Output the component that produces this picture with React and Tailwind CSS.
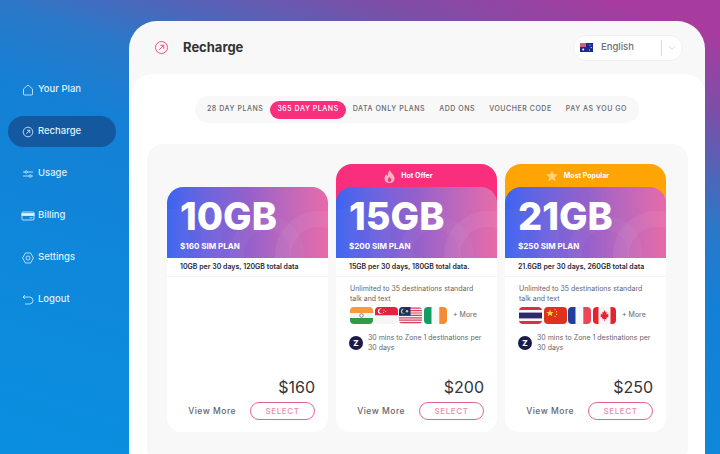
import { ChevronDown } from 'lucide-react';

const font = { fontFamily: 'Inter, "Open Sans", sans-serif' };

const HomeIcon = () => (
  <svg width="12" height="12" viewBox="0 0 12 12" fill="none" stroke="currentColor" strokeWidth="0.8">
    <path d="M1.5 5 L6 1 L10.5 5 V10 Q10.5 11 9.5 11 H2.5 Q1.5 11 1.5 10 Z" />
  </svg>
);

const RechargeIcon = ({ size = 12, width = 0.8 }) => (
  <svg width={size} height={size} viewBox="0 0 12 12" fill="none" stroke="currentColor" strokeWidth={width}>
    <circle cx="6" cy="6" r="4.8" />
    <path d="M4.2 7.8 L7.8 4.2 M5 4.2 H7.8 V7" />
  </svg>
);

const UsageIcon = () => (
  <svg width="12" height="12" viewBox="0 0 12 12" fill="none" stroke="currentColor" strokeWidth="0.8">
    <path d="M1 4 H3 M5.5 4 H11 M1 8 H7 M9.5 8 H11" />
    <circle cx="4.2" cy="4" r="1.2" />
    <circle cx="8.2" cy="8" r="1.2" />
  </svg>
);

const BillingIcon = () => (
  <svg width="14" height="12" viewBox="0 0 14 12" fill="none" stroke="currentColor" strokeWidth="0.8">
    <rect x="1" y="2" width="12" height="8" rx="1" />
    <rect x="1" y="3.6" width="12" height="2" fill="currentColor" />
    <path d="M8.5 7.8 H11.5" />
  </svg>
);

const SettingsIcon = () => (
  <svg width="12" height="12" viewBox="0 0 12 12" fill="none" stroke="currentColor" strokeWidth="0.8">
    <path d="M3.4 1 H8.6 L11.4 6 L8.6 11 H3.4 L0.6 6 Z" />
    <circle cx="6" cy="6" r="2" />
  </svg>
);

const LogoutIcon = () => (
  <svg width="12" height="12" viewBox="0 0 12 12" fill="none" stroke="currentColor" strokeWidth="0.8">
    <path d="M3 1 L1 3 L3 5 M1 3 H7.5 A3.4 3.4 0 0 1 7.5 10 H3" />
  </svg>
);

const FlameIcon = () => (
  <svg width="11" height="13" viewBox="0 0 11 13" fill="#ffb4c4">
    <path d="M5.8 0 C6.2 2.4 10.5 4.6 10.5 8.4 C10.5 11.2 8.2 13 5.5 13 C2.8 13 0.5 11.2 0.5 8.4 C0.5 6.4 1.6 5 2.6 4.2 C2.7 5.2 3 5.9 3.7 6.3 C3.6 4 4.4 1.6 5.8 0 Z M5.5 7 C4.6 8.2 3.7 9 3.7 10.2 C3.7 11.2 4.5 11.9 5.5 11.9 C6.5 11.9 7.3 11.2 7.3 10.2 C7.3 9 6.3 8.2 5.5 7 Z" fillRule="evenodd" />
  </svg>
);

const StarIcon = () => (
  <svg width="12" height="12" viewBox="0 0 12 12" fill="#ffd277">
    <path d="M6 0.5 L7.7 4 L11.6 4.5 L8.8 7.2 L9.5 11.2 L6 9.3 L2.5 11.2 L3.2 7.2 L0.4 4.5 L4.3 4 Z" />
  </svg>
);

const FlagShell = ({ children }) => (
  <svg width="23" height="17" viewBox="0 0 23 17" className="shrink-0 rounded-[4px]">
    {children}
  </svg>
);

const flags = {
  india: (
    <FlagShell>
      <rect width="23" height="6" fill="#f79a3c" />
      <rect y="6" width="23" height="5" fill="#f4f4f4" />
      <rect y="11" width="23" height="6" fill="#2f9a4a" />
      <circle cx="11.5" cy="8.5" r="1.8" fill="none" stroke="#5a62a8" strokeWidth="0.7" />
    </FlagShell>
  ),
  singapore: (
    <FlagShell>
      <rect width="23" height="8.5" fill="#e0233f" />
      <rect y="8.5" width="23" height="8.5" fill="#f6f6f6" />
      <circle cx="5.5" cy="4.2" r="2.6" fill="#fff" />
      <circle cx="6.6" cy="4.2" r="2.4" fill="#e0233f" />
      <circle cx="9" cy="3" r="0.5" fill="#fff" />
      <circle cx="10.6" cy="4.4" r="0.5" fill="#fff" />
      <circle cx="8.6" cy="5.6" r="0.5" fill="#fff" />
    </FlagShell>
  ),
  malaysia: (
    <FlagShell>
      <rect width="23" height="17" fill="#f5f5f5" />
      <path d="M0 1.2 H23 M0 3.6 H23 M0 6 H23 M0 8.4 H23 M0 10.8 H23 M0 13.2 H23 M0 15.6 H23" stroke="#d9405a" strokeWidth="1.2" />
      <rect width="11.5" height="8.6" fill="#18306e" />
      <circle cx="4.4" cy="4.3" r="2.5" fill="#f6c93a" />
      <circle cx="5.4" cy="4.3" r="2.2" fill="#18306e" />
      <circle cx="8" cy="4.3" r="1.2" fill="#f6c93a" />
    </FlagShell>
  ),
  ireland: (
    <FlagShell>
      <rect width="7.7" height="17" fill="#169b62" />
      <rect x="7.7" width="7.6" height="17" fill="#f8f8f8" />
      <rect x="15.3" width="7.7" height="17" fill="#f58b32" />
    </FlagShell>
  ),
  thailand: (
    <FlagShell>
      <rect width="23" height="17" fill="#d8304a" />
      <rect y="3" width="23" height="11" fill="#f6f6f6" />
      <rect y="5.6" width="23" height="5.8" fill="#2d2a6b" />
    </FlagShell>
  ),
  china: (
    <FlagShell>
      <rect width="23" height="17" fill="#e0301e" />
      <path d="M6 2.4 L7 5 L9.6 5 L7.6 6.7 L8.3 9.3 L6 7.8 L3.7 9.3 L4.4 6.7 L2.4 5 L5 5 Z" fill="#f9d43a" />
      <circle cx="11" cy="2.6" r="0.7" fill="#f9d43a" />
      <circle cx="12.6" cy="4.8" r="0.7" fill="#f9d43a" />
      <circle cx="12.6" cy="7.4" r="0.7" fill="#f9d43a" />
      <circle cx="11" cy="9.4" r="0.7" fill="#f9d43a" />
    </FlagShell>
  ),
  france: (
    <FlagShell>
      <rect width="7.7" height="17" fill="#1d3f9e" />
      <rect x="7.7" width="7.6" height="17" fill="#f8f8f8" />
      <rect x="15.3" width="7.7" height="17" fill="#ef4456" />
    </FlagShell>
  ),
  canada: (
    <FlagShell>
      <rect width="23" height="17" fill="#f5f5f5" />
      <rect width="5.5" height="17" fill="#e5232e" />
      <rect x="17.5" width="5.5" height="17" fill="#e5232e" />
      <path d="M11.5 3 L12.6 5.4 L13.8 4.8 L13.4 7.6 L15.4 6.8 L15 8.4 L16 9 L13.4 11 L13.6 12.2 L11.8 12 V14 H11.2 V12 L9.4 12.2 L9.6 11 L7 9 L8 8.4 L7.6 6.8 L9.6 7.6 L9.2 4.8 L10.4 5.4 Z" fill="#e5232e" />
    </FlagShell>
  ),
};

const Watermark = () => (
  <svg className="absolute inset-0 h-full w-full" viewBox="0 0 161 71" fill="none">
    <rect x="0" y="22" width="22" height="49" fill="#fff" opacity="0.025" />
    <rect x="34" y="22" width="20" height="49" fill="#fff" opacity="0.025" />
    <circle cx="100" cy="66" r="30" stroke="#fff" strokeOpacity="0.035" strokeWidth="14" />
    <circle cx="152" cy="68" r="36" stroke="#fff" strokeOpacity="0.06" strokeWidth="16" />
  </svg>
);

const navItems = [
  { label: 'Your Plan', icon: <HomeIcon /> },
  { label: 'Recharge', icon: <RechargeIcon />, active: true },
  { label: 'Usage', icon: <UsageIcon /> },
  { label: 'Billing', icon: <BillingIcon /> },
  { label: 'Settings', icon: <SettingsIcon /> },
  { label: 'Logout', icon: <LogoutIcon /> },
];

const tabs = [
  { label: '28 DAY PLANS' },
  { label: '365 DAY PLANS', active: true },
  { label: 'DATA ONLY PLANS' },
  { label: 'ADD ONS' },
  { label: 'VOUCHER CODE' },
  { label: 'PAY AS YOU GO' },
];

const plans = [
  { size: '10GB', sim: '$160 SIM PLAN', summary: '10GB per 30 days, 120GB total data', price: '$160' },
  {
    size: '15GB',
    sim: '$200 SIM PLAN',
    summary: '15GB per 30 days, 180GB total data.',
    price: '$200',
    badge: 'Hot Offer',
    badgeIcon: <FlameIcon />,
    badgeClass: 'bg-[#f92f7d]',
    countries: ['india', 'singapore', 'malaysia', 'ireland'],
  },
  {
    size: '21GB',
    sim: '$250 SIM PLAN',
    summary: '21.6GB per 30 days, 260GB total data',
    price: '$250',
    badge: 'Most Popular',
    badgeIcon: <StarIcon />,
    badgeClass: 'bg-[#ffa405]',
    countries: ['thailand', 'china', 'france', 'canada'],
  },
];

const Sidebar = () => (
  <nav className="flex w-[129px] shrink-0 flex-col gap-[11px] pl-2 pr-[13px] pt-[74px] text-[#dff1fd]">
    {navItems.map((item) => (
      <div
        key={item.label}
        className={`flex h-[31px] items-center gap-[3px] rounded-full pl-[12px] text-[9.5px] font-medium ${item.active ? 'bg-[#14599f]' : ''}`}
      >
        <span className="flex w-[15px] justify-center">{item.icon}</span>
        {item.label}
      </div>
    ))}
  </nav>
);

const Header = () => (
  <header className="flex h-[53px] shrink-0 items-center pl-[25px] pr-[22px]">
    <span className="text-[#e2557f]">
      <RechargeIcon size={15} width={0.8} />
    </span>
    <h1 className="ml-[14px] text-[13px] font-bold text-[#333]">Recharge</h1>
    <div className="ml-auto flex h-[26px] w-[110px] items-center rounded-full border border-[#f0f0f2] bg-white pl-[6px]">
      <svg width="13" height="9" viewBox="0 0 13 9" className="shrink-0">
        <rect width="13" height="9" fill="#1c2a8c" />
        <rect width="6" height="4" fill="#c9647f" />
        <circle cx="3.2" cy="6.6" r="1" fill="#fff" />
        <circle cx="10" cy="2" r="0.6" fill="#fff" />
        <circle cx="11.2" cy="4.6" r="0.6" fill="#fff" />
        <circle cx="9.4" cy="7" r="0.6" fill="#fff" />
      </svg>
      <span className="ml-[8px] text-[9.5px] font-medium text-[#6f6f73]">English</span>
      <span className="ml-auto h-[16px] w-px bg-[#dcdcde]" />
      <ChevronDown size={10} strokeWidth={1} className="mx-[5px] text-[#9a9a9e]" />
    </div>
  </header>
);

const PlanTabs = () => (
  <div className="flex justify-center pr-[3px]">
    <div className="flex h-[27px] items-center rounded-full bg-[#f8f8f9] px-[5px]">
      {tabs.map((tab) => (
        <span
          key={tab.label}
          className={`flex h-[18px] items-center rounded-full px-[7px] text-[7px] font-medium tracking-[0.55px] whitespace-nowrap ${tab.active ? 'bg-[#f92f7d] font-bold text-white' : 'text-[#66666a]'}`}
        >
          {tab.label}
        </span>
      ))}
    </div>
  </div>
);

const PlanCard = ({ plan }) => (
  <article className="flex h-[268px] flex-col">
    <div className={`shrink-0 overflow-hidden rounded-t-[16px] ${plan.badge ? plan.badgeClass : ''}`}>
      {plan.badge ? (
        <div className="flex h-[23px] items-center justify-center gap-[6px] pr-[16px] pt-px text-[7px] font-bold text-white">
          {plan.badgeIcon}
          {plan.badge}
        </div>
      ) : (
        <div className="h-[23px]" />
      )}
      <div className="relative h-[71px] overflow-hidden rounded-t-[16px] bg-gradient-to-r from-[#3a64f0] via-[#9460cc] to-[#e86aa8] text-white">
        <Watermark />
        <div className="relative flex h-full flex-col pl-[13px]">
          <span className="mt-[7px] text-[38px] leading-[44px] font-extrabold">{plan.size}</span>
          <span className="mt-[2px] text-[8px] font-bold">{plan.sim}</span>
        </div>
      </div>
    </div>
    <div className="flex min-h-0 flex-1 flex-col rounded-b-[14px] bg-white">
      <div className="flex h-[19px] shrink-0 items-center border-b border-[#f4f4f6] pl-[13px] text-[7px] font-semibold text-[#26263a]">
        {plan.summary}
      </div>
      {plan.countries ? (
        <div className="pl-[14px] pr-[12px] pt-[7px] text-[7px] text-[#66666c]">
          <p className="leading-[10px]">Unlimited to 35 destinations standard talk and text</p>
          <div className="mt-[3px] flex items-center gap-[1.5px]">
            {plan.countries.map((code) => (
              <span key={code} className="flex">{flags[code]}</span>
            ))}
            <span className="ml-[5px]">+ More</span>
          </div>
          <div className="-ml-px mt-[9px] flex items-center gap-[5px]">
            <span className="flex h-[14px] w-[14px] shrink-0 items-center justify-center rounded-full bg-[#1b1b4b] text-[8px] font-extrabold text-white">
              Z
            </span>
            <p className="leading-[10px]">30 mins to Zone 1 destinations per 30 days</p>
          </div>
        </div>
      ) : null}
      <div className="mt-auto flex flex-col items-end pb-[12px] pr-[13px]">
        <span className="text-[16px] leading-[20px] text-[#33333a]">{plan.price}</span>
        <div className="mt-[5px] flex items-center">
          <span className="mr-[14px] text-[8.5px] font-medium tracking-[0.5px] text-[#66666a]">View More</span>
          <span className="flex h-[18px] w-[65px] items-center justify-center rounded-full border border-[#e0668e] text-[8px] font-medium tracking-[0.6px] text-[#ec8bab]">
            SELECT
          </span>
        </div>
      </div>
    </div>
  </article>
);

const App = () => (
  <div
    style={font}
    className="flex h-[454px] w-[720px] overflow-hidden bg-[linear-gradient(17.5deg,#0a8fe0_0%,#0f87da_33%,#1480d5_55%,#2a78c8_66%,#7a50a8_83%,#a83b9e_95%)]"
  >
    <Sidebar />
    <main className="mt-[21px] flex h-[500px] w-[576px] shrink-0 flex-col rounded-t-[28px] bg-[#f8f8f9]">
      <Header />
      <div className="ml-[3px] flex-1 rounded-t-[20px] bg-white pt-[22px]">
        <PlanTabs />
        <section className="ml-[15px] mt-[21px] h-[320px] w-[541px] rounded-[16px] bg-[#f8f8f9] pl-[20px] pt-[20px]">
          <div className="grid w-[499px] grid-cols-3 gap-[8px]">
            {plans.map((plan) => (
              <PlanCard key={plan.size} plan={plan} />
            ))}
          </div>
        </section>
      </div>
    </main>
  </div>
);

export default App;
